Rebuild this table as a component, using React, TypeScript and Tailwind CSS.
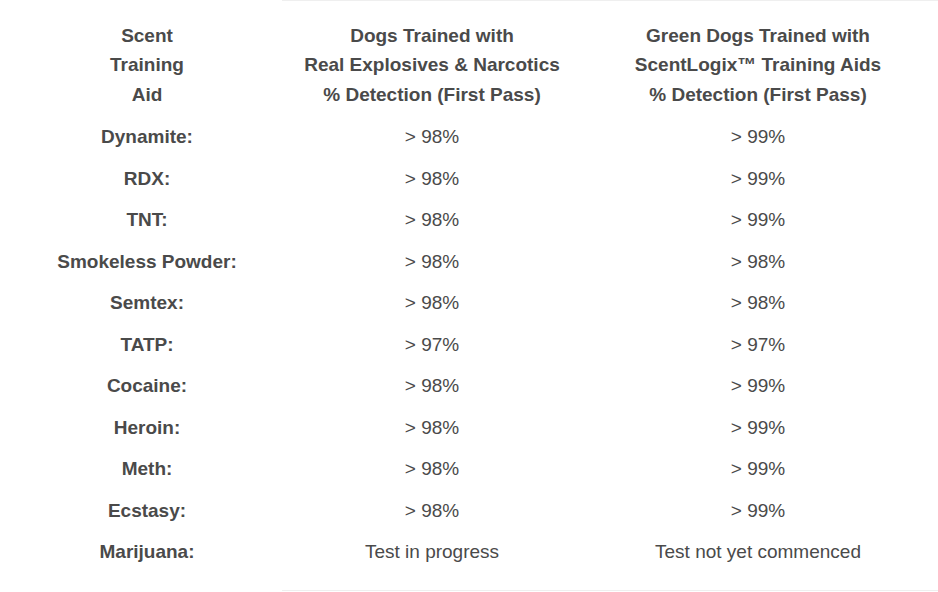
import React from "react";

const rows: [string, string, string][] = [
  ["Dynamite:", "> 98%", "> 99%"],
  ["RDX:", "> 98%", "> 99%"],
  ["TNT:", "> 98%", "> 99%"],
  ["Smokeless Powder:", "> 98%", "> 98%"],
  ["Semtex:", "> 98%", "> 98%"],
  ["TATP:", "> 97%", "> 97%"],
  ["Cocaine:", "> 98%", "> 99%"],
  ["Heroin:", "> 98%", "> 99%"],
  ["Meth:", "> 98%", "> 99%"],
  ["Ecstasy:", "> 98%", "> 99%"],
  ["Marijuana:", "Test in progress", "Test not yet commenced"],
];

export default function App() {
  return (
    <div
      className="w-[938px] h-[592px] bg-white overflow-hidden flex flex-col text-[#4a4a4a] text-[19px]"
      style={{ fontFamily: '"Liberation Sans", Arial, sans-serif' }}
    >
      <div className="ml-[282px] h-px bg-[#efefef] shrink-0" />
      <div className="grid grid-cols-[294px_276px_376px] w-[946px] pt-[19.5px] shrink-0">
        <div className="text-center font-bold leading-[29.5px] pb-[7.5px]">
          Scent
          <br />
          Training
          <br />
          Aid
        </div>
        <div className="text-center font-bold leading-[29.5px] pb-[7.5px]">
          Dogs Trained with
          <br />
          Real Explosives &amp; Narcotics
          <br />% Detection (First Pass)
        </div>
        <div className="text-center font-bold leading-[29.5px] pb-[7.5px]">
          Green Dogs Trained with
          <br />
          ScentLogix™ Training Aids
          <br />% Detection (First Pass)
        </div>
        {rows.map(([a, b, c]) => (
          <React.Fragment key={a}>
            <div className="h-[41.5px] flex items-center justify-center font-bold">{a}</div>
            <div className="h-[41.5px] flex items-center justify-center">{b}</div>
            <div className="h-[41.5px] flex items-center justify-center">{c}</div>
          </React.Fragment>
        ))}
      </div>
      <div className="flex-1" />
      <div className="ml-[282px] h-px bg-[#efefef] shrink-0 mb-[1px]" />
    </div>
  );
}
